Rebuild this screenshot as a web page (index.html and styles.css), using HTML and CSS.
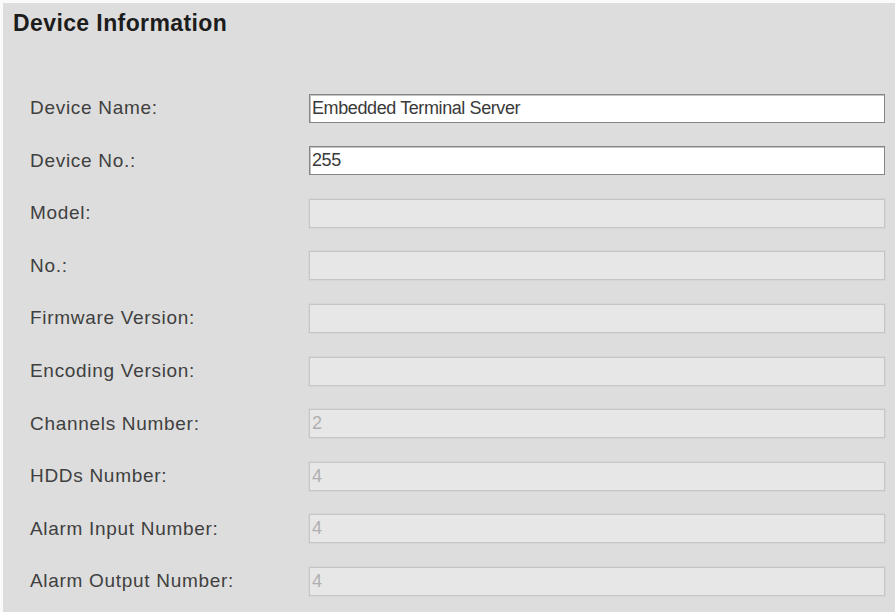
FILE: index.html
```html
<!DOCTYPE html>
<html lang="en">
<head>
    <meta charset="UTF-8">
    <meta name="viewport" content="width=device-width, initial-scale=1.0">
    <title>Device Information</title>
    <link rel="stylesheet" href="styles.css">
</head>
<body>
    <div class="panel">
        <h2 class="title">Device Information</h2>

        <div class="rows">
            <div class="row">
                <label>Device Name:</label>
                <input type="text" value="Embedded Terminal Server">
            </div>
            <div class="row">
                <label>Device No.:</label>
                <input type="text" value="255">
            </div>
            <div class="row">
                <label>Model:</label>
                <input type="text" value="" disabled>
            </div>
            <div class="row">
                <label>No.:</label>
                <input type="text" value="" disabled>
            </div>
            <div class="row">
                <label>Firmware Version:</label>
                <input type="text" value="" disabled>
            </div>
            <div class="row">
                <label>Encoding Version:</label>
                <input type="text" value="" disabled>
            </div>
            <div class="row">
                <label>Channels Number:</label>
                <input type="text" value="2" disabled>
            </div>
            <div class="row">
                <label>HDDs Number:</label>
                <input type="text" value="4" disabled>
            </div>
            <div class="row">
                <label>Alarm Input Number:</label>
                <input type="text" value="4" disabled>
            </div>
            <div class="row">
                <label>Alarm Output Number:</label>
                <input type="text" value="4" disabled>
            </div>
        </div>
    </div>
</body>
</html>
```

FILE: styles.css
```css
* {
    margin: 0;
    padding: 0;
    box-sizing: border-box;
}

body {
    font-family: "Liberation Sans", Arial, sans-serif;
    background-color: #fafafa;
    padding: 3px 0 0 3px;
    height: 612px;
    overflow: hidden;
}

.panel {
    background: #dddddd;
    height: 620px;
    padding: 7px 10px 0 10px;
}

.title {
    font-size: 23px;
    line-height: 26px;
    font-weight: bold;
    letter-spacing: 0.4px;
    color: #1c1c1c;
}

.rows {
    margin-top: 46px;
    padding-left: 17px;
}

.row {
    display: flex;
    align-items: center;
    height: 52.55px;
}

label {
    width: 279px;
    flex: none;
    font-size: 19px;
    letter-spacing: 0.7px;
    color: #404040;
}

input {
    width: 576px;
    height: 29px;
    padding: 0 2px;
    font-family: "Liberation Sans", Arial, sans-serif;
    font-size: 18px;
    letter-spacing: -0.4px;
    color: #3a3a3a;
    background: #ffffff;
    border: 1px solid #858585;
    box-shadow: inset 1px 1px 0 #c4c4c4;
    outline: none;
}

input:disabled {
    color: #b0b0b0;
    background: #e7e7e7;
    border: 1px solid #c6c6c6;
    box-shadow: 0 0 0 1px #d6d6d6;
}
```
